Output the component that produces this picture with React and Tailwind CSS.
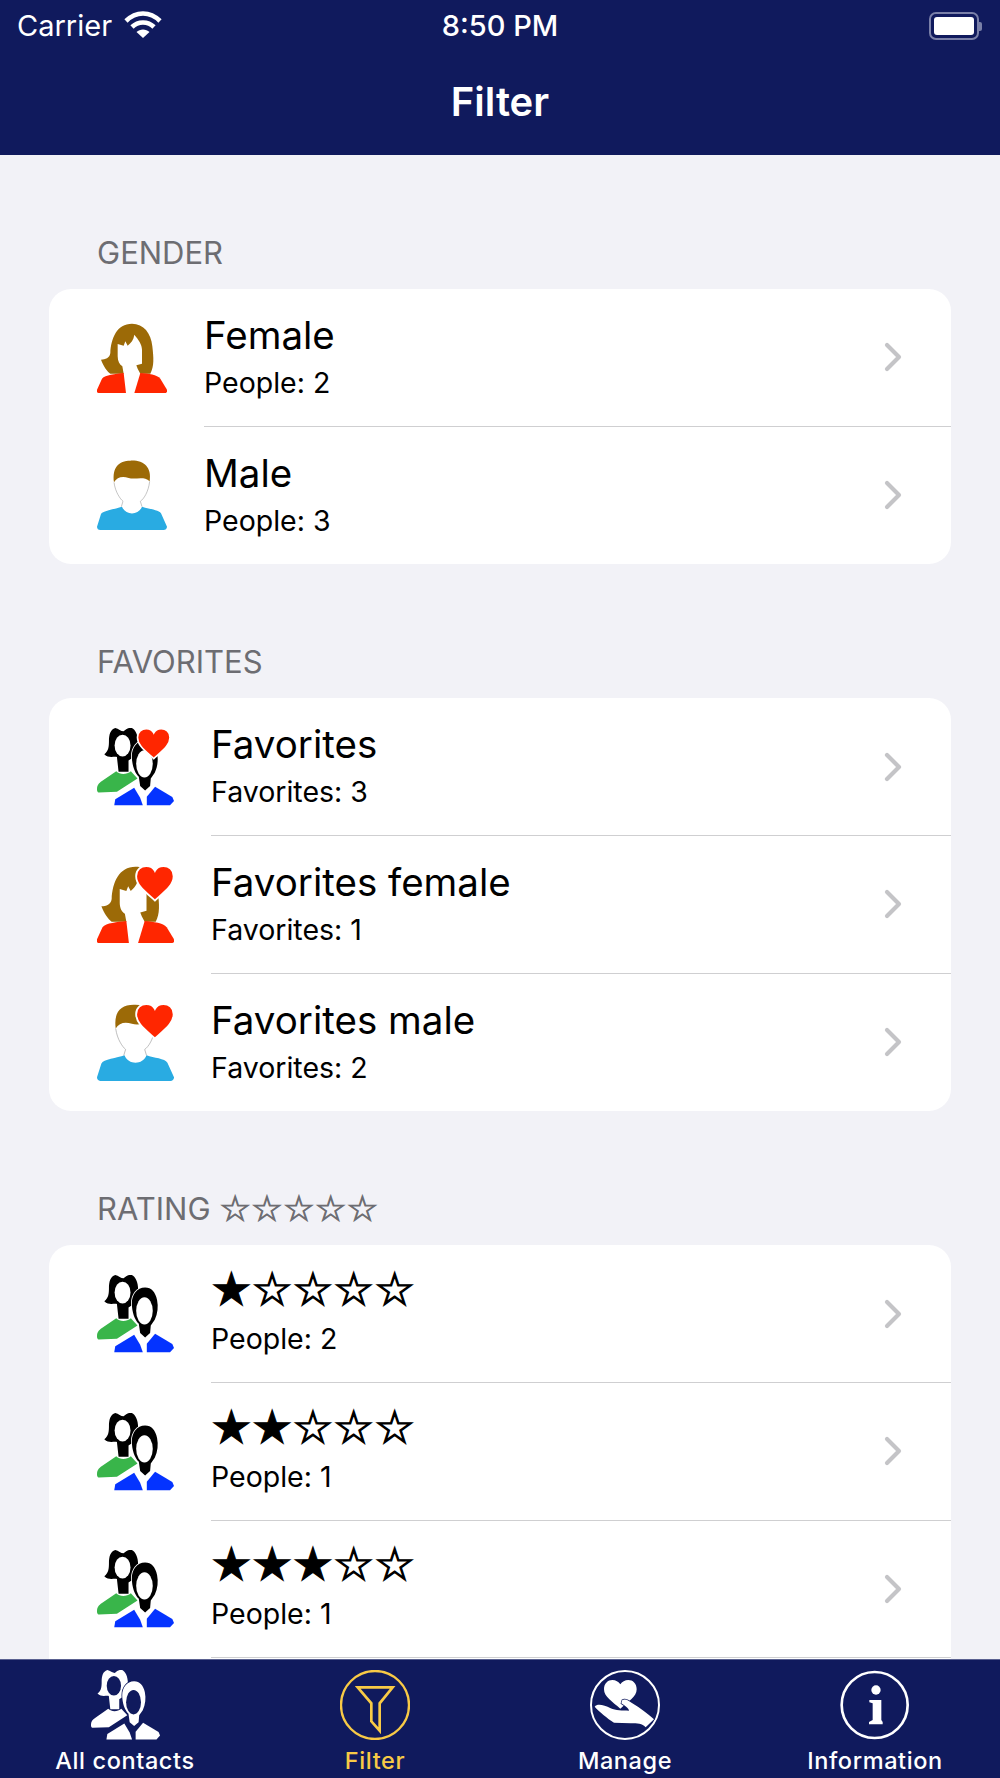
const NAVY = '#101a5d'

function Heart({ x, y, s = 1 }) {
  return (
    <path
      transform={`translate(${x} ${y}) scale(${s})`}
      d="M50 92C20 65 0 50 0 27 0 10 13 0 27 0c10 0 19 5 23 13C54 5 63 0 73 0c14 0 27 10 27 27 0 23-20 38-50 65Z"
      fill="#ff2600"
      stroke="#fff"
      strokeWidth="5"
    />
  )
}

function FemaleShape() {
  return (
    <>
      <path d="M215 97C250 97 272 125 276 165 280 200 282 225 270 247L150 247C140 240 130 225 122 205 135 205 148 200 150 185 152 140 170 97 215 97Z" fill="#9c6a07" />
      <path d="M172 158 190 163 195 150 202 163C212 155 220 145 222 130 235 145 245 160 245 175L245 217 228 222 232 232 240 247 222 305 197 305 190 247 186 225C178 220 172 210 172 195Z" fill="#fff" />
      <path d="M110 295 125 262C135 250 165 248 190 245L197 305 115 305C110 305 108 300 110 295Z" fill="#ff2600" />
      <path d="M240 245C265 247 290 250 300 262L320 295C322 302 318 305 314 305L222 305Z" fill="#ff2600" />
    </>
  )
}

function MaleShape() {
  return (
    <>
      <path d="M110 708 122 670C127 660 165 655 185 648 195 675 235 675 245 648 265 655 295 657 302 668L320 708C320 714 315 718 310 718L120 718C114 718 110 714 110 708Z" fill="#29abe2" />
      <path d="M161 575C165 605 180 625 188 632L183 648M268 572C264 605 250 625 240 632L245 648" fill="none" stroke="#8a8a8a" strokeWidth="1.5" />
      <path d="M161 575C155 530 175 510 210 510 250 508 275 530 268 572 250 555 225 568 205 562 185 556 170 560 161 575Z" fill="#9c6a07" />
    </>
  )
}

function CoupleShape({ hair = '#000', face = '#fff', left = '#39b54a', right = '#0433ff', halo = '#fff' }) {
  return (
    <>
      <path d="M165 280C175 282 182 290 190 290 198 283 205 278 215 280 225 285 234 300 234 325L232 360 205 378 205 412 175 412 170 367C160 365 145 372 132 359 145 350 146 335 146 320 146 300 150 285 165 280Z" fill={hair} />
      <ellipse cx="187" cy="333" rx="24" ry="33" fill={face} />
      <path d="M110 465C110 452 115 447 125 440L168 410C180 422 200 420 212 410L232 432 170 472 115 474C112 474 110 470 110 465Z" fill={left} />
      <path d="M162 513 165 495 222 460 240 490 248 513Z" fill={right} />
      <path d="M260 513 260 487 285 457 337 488 342 500 330 513Z" fill={right} />
      <path d="M255 318C274 318 286 332 291 355 295 375 293 395 284 415L272 432 270 455 255 468 240 455 236 427C223 415 215 390 215 365 215 340 230 318 255 318Z" fill={hair} stroke={halo} strokeWidth="5" paintOrder="stroke" />
      <ellipse cx="253" cy="388" rx="25" ry="41" fill={face} />
    </>
  )
}

function FemaleIcon() {
  return <svg viewBox="110 95 210 210" className="w-[70px] h-[70px]"><FemaleShape /></svg>
}

function MaleIcon() {
  return <svg viewBox="110 508 210 210" className="w-[70px] h-[70px]"><MaleShape /></svg>
}

function CoupleIcon() {
  return <svg viewBox="110 280 232 235" className="w-[77px] h-[78px]"><CoupleShape /></svg>
}

function FavCoupleIcon() {
  return (
    <svg viewBox="110 280 232 235" className="w-[77px] h-[78px]">
      <CoupleShape />
      <Heart x={232} y={282} s={0.98} />
    </svg>
  )
}

function FavFemaleIcon() {
  return (
    <svg viewBox="0 0 232 232" className="w-[77px] h-[77px]">
      <g transform="scale(1.105) translate(-110 -95)"><FemaleShape /></g>
      <Heart x={118} y={0} s={1.13} />
    </svg>
  )
}

function FavMaleIcon() {
  return (
    <svg viewBox="0 0 232 232" className="w-[77px] h-[77px]">
      <g transform="scale(1.105) translate(-110 -508)"><MaleShape /></g>
      <Heart x={118} y={0} s={1.13} />
    </svg>
  )
}

function Chevron() {
  return (
    <svg viewBox="0 0 18 30" className="w-[18px] h-[30px] mr-[49px] shrink-0">
      <path d="M3 3 15 15 3 27" fill="none" stroke="#c4c4c7" strokeWidth="4.2" strokeLinecap="round" strokeLinejoin="round" />
    </svg>
  )
}

function Stars({ count }) {
  return (
    <span className="font-['DejaVu_Sans',sans-serif] text-[45.500px] leading-[46px] -mt-[1px] mb-[1px] [-webkit-text-stroke:1.2px_#000]">
      {'★'.repeat(count) + '☆'.repeat(5 - count)}
    </span>
  )
}

function Row({ icon, iconBox, title, sub, stars, last }) {
  return (
    <div className="flex h-[137.67px] items-center pl-[48px]">
      <div className={`${iconBox} shrink-0`}>{icon}</div>
      <div className={`flex flex-1 h-full items-center justify-between ${last ? '' : 'border-b border-[#cfcfd1]'}`}>
        <div className="flex flex-col pb-[2px]">
          {stars ? <Stars count={stars} /> : <span className="text-[38.500px] leading-[46px] text-black">{title}</span>}
          <span className="text-[28.500px] leading-[36px] mt-[7px] text-black">{sub}</span>
        </div>
        <Chevron />
      </div>
    </div>
  )
}

function Section({ label, children }) {
  return (
    <section className="pt-[81px]">
      <h2 className="h-[34px] mb-[19px] ml-[97px] flex items-center text-[31px] text-[#6d6d72]">{label}</h2>
      <div className="mx-[49px] bg-white rounded-[22px] overflow-hidden">{children}</div>
    </section>
  )
}

function TabItem({ icon, label, active }) {
  return (
    <div className={`flex flex-col items-center ${active ? 'text-[#f8ca46]' : 'text-white'}`}>
      <div className="h-[70px] flex items-center">{icon}</div>
      <span className="text-[23.500px] leading-[28px] mt-[7px] font-medium tracking-[0.6px]">{label}</span>
    </div>
  )
}

export default function App() {
  return (
    <div className="w-[1000px] h-[1778px] flex flex-col overflow-hidden font-['Inter',sans-serif] bg-[#f2f2f7]">
      <header className="h-[155px] shrink-0 relative text-white" style={{ backgroundColor: NAVY }}>
        <div className="h-[52px] flex items-center justify-between pl-[17px] pr-[18px] text-[29px]">
          <div className="flex items-center gap-[12px]">
            <span>Carrier</span>
            <svg viewBox="0 0 38 28" className="w-[38px] h-[28px] -mt-[3px]">
              <path d="M2 10C12 0 26 0 36 10" fill="none" stroke="#fff" strokeWidth="4.6" />
              <path d="M8 16C14 10 24 10 30 16" fill="none" stroke="#fff" strokeWidth="4.6" />
              <path d="M19 27 12.500 21C16 17.500 22 17.500 25.500 21Z" fill="#fff" />
            </svg>
          </div>
          <span className="absolute left-0 right-0 text-center font-medium">8:50 PM</span>
          <div className="flex items-center">
            <div className="w-[50px] h-[28px] rounded-[7px] border-2 border-[#7a80a8] p-[3px]">
              <div className="w-full h-full bg-white rounded-[3px]" />
            </div>
            <div className="w-[3px] h-[9px] bg-[#7a80a8] rounded-r-[2px]" />
          </div>
        </div>
        <h1 className="text-center text-[40px] leading-[46px] mt-[27px] font-semibold">Filter</h1>
      </header>

      <main className="flex-1 overflow-hidden">
        <Section label="GENDER">
          <Row icon={<FemaleIcon />} iconBox="w-[107px]" title="Female" sub="People: 2" />
          <Row icon={<MaleIcon />} iconBox="w-[107px]" title="Male" sub="People: 3" last />
        </Section>
        <Section label="FAVORITES">
          <Row icon={<FavCoupleIcon />} iconBox="w-[114px]" title="Favorites" sub="Favorites: 3" />
          <Row icon={<FavFemaleIcon />} iconBox="w-[114px]" title="Favorites female" sub="Favorites: 1" />
          <Row icon={<FavMaleIcon />} iconBox="w-[114px]" title="Favorites male" sub="Favorites: 2" last />
        </Section>
        <Section label={<>RATING&nbsp;<span className="font-['DejaVu_Sans',sans-serif] text-[35.500px] leading-[34px] [-webkit-text-stroke:0.9px_#6d6d72]">☆☆☆☆☆</span></>}>
          <Row icon={<CoupleIcon />} iconBox="w-[114px]" stars={1} sub="People: 2" />
          <Row icon={<CoupleIcon />} iconBox="w-[114px]" stars={2} sub="People: 1" />
          <Row icon={<CoupleIcon />} iconBox="w-[114px]" stars={3} sub="People: 1" />
          <div className="h-[40px]" />
        </Section>
      </main>

      <nav className="h-[119px] shrink-0 grid grid-cols-4 pt-[10px] border-t border-[#5a6190]" style={{ backgroundColor: NAVY }}>
        <TabItem
          label="All contacts"
          icon={
            <svg viewBox="110 280 232 235" className="w-[71px] h-[70px]">
              <CoupleShape hair="#fff" face={NAVY} left="#fff" right="#fff" halo={NAVY} />
            </svg>
          }
        />
        <TabItem
          active
          label="Filter"
          icon={
            <svg viewBox="1022 90 210 210" className="w-[70px] h-[70px]">
              <circle cx="1127" cy="195" r="102" fill="none" stroke="#f8ca46" strokeWidth="7" />
              <path d="M1075 142H1180L1141 190V272L1116 244V190Z" fill="none" stroke="#f8ca46" strokeWidth="8" />
            </svg>
          }
        />
        <TabItem
          label="Manage"
          icon={
            <svg viewBox="268 90 210 210" className="w-[70px] h-[70px]">
              <circle cx="373" cy="195" r="102" fill="none" stroke="#fff" strokeWidth="6" />
              <path d="M359 206C335 185 310 170 310 148 310 130 322 120 335 120 345 120 354 125 359 133 364 125 373 120 383 120 396 120 408 130 408 148 408 170 383 185 359 206Z" fill="#fff" />
              <path d="M365 180C375 175 385 182 395 190 420 205 440 220 460 238L435 262C425 250 410 250 390 250L340 248C320 235 295 215 282 200 290 190 310 195 330 205 345 212 365 212 385 212 385 205 370 195 362 190Z" fill="#fff" stroke={NAVY} strokeWidth="4" paintOrder="stroke" />
            </svg>
          }
        />
        <TabItem
          label="Information"
          icon={
            <svg viewBox="1022 90 210 210" className="w-[70px] h-[70px]">
              <circle cx="1126" cy="195" r="99" fill="none" stroke="#fff" strokeWidth="8" />
              <circle cx="1130" cy="150" r="14" fill="#fff" />
              <path d="M1110 180H1146V240L1150 246V253H1109V246L1120 240V190L1110 187Z" fill="#fff" />
            </svg>
          }
        />
      </nav>
    </div>
  )
}
